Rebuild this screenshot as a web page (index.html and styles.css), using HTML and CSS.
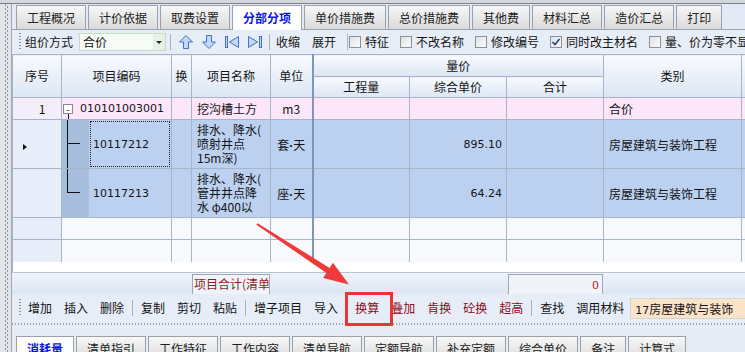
FILE: index.html
```html
<!DOCTYPE html>
<html lang="zh-CN">
<head>
<meta charset="utf-8">
<title>分部分项</title>
<link rel="stylesheet" href="styles.css">
</head>
<body>
<div class="topline"></div>
<div class="app">
  <div class="grip-col"></div>
  <div class="main">
    <div class="tabs">
      <div class="tab">工程概况</div>
      <div class="tab">计价依据</div>
      <div class="tab">取费设置</div>
      <div class="tab active">分部分项</div>
      <div class="tab">单价措施费</div>
      <div class="tab">总价措施费</div>
      <div class="tab">其他费</div>
      <div class="tab">材料汇总</div>
      <div class="tab">造价汇总</div>
      <div class="tab">打印</div>
    </div>

    <div class="toolbar top-tb">
      <span class="grip"></span>
      <span class="lbl">组价方式</span>
      <span class="combo"><span class="combo-text">合价</span><span class="combo-btn"><span class="tri-down"></span></span></span>
      <span class="sep sep-combo"></span>
      <svg class="ico first-ico" width="16" height="16" viewBox="0 0 16 16"><polygon points="8,1.5 14.5,8 10.5,8 10.5,14.5 5.5,14.5 5.5,8 1.5,8" fill="#c4d8f6" stroke="#3d73cc" stroke-width="1"/></svg>
      <svg class="ico" width="16" height="16" viewBox="0 0 16 16"><polygon points="8,14.5 14.5,8 10.5,8 10.5,1.5 5.5,1.5 5.5,8 1.5,8" fill="#c4d8f6" stroke="#3d73cc" stroke-width="1"/></svg>
      <svg class="ico" width="16" height="16" viewBox="0 0 16 16"><rect x="1.5" y="2.5" width="2" height="11" fill="#c4d8f6" stroke="#3d73cc"/><polygon points="14.5,2.5 5.5,8 14.5,13.5" fill="#c4d8f6" stroke="#3d73cc"/></svg>
      <svg class="ico" width="16" height="16" viewBox="0 0 16 16"><polygon points="1.5,2.5 10.5,8 1.5,13.5" fill="#c4d8f6" stroke="#3d73cc"/><rect x="12.5" y="2.5" width="2" height="11" fill="#c4d8f6" stroke="#3d73cc"/></svg>
      <span class="sep sep-after-ico"></span>
      <span class="btn b-first">收缩</span>
      <span class="btn">展开</span>
      <span class="sep sep-chk"></span>
      <span class="chk-item first-chk"><span class="chk"></span><span>特征</span></span>
      <span class="chk-item"><span class="chk"></span><span>不改名称</span></span>
      <span class="chk-item"><span class="chk"></span><span>修改编号</span></span>
      <span class="chk-item"><span class="chk checked"><svg width="10" height="10" viewBox="0 0 10 10"><polyline points="1.5,5 4,7.5 8.5,2" fill="none" stroke="#23408e" stroke-width="1.6"/></svg></span><span>同时改主材名</span></span>
      <span class="chk-item"><span class="chk"></span><span>量、价为零不显示</span></span>
    </div>

    <div class="grid-wrap">
      <table class="grid">
        <colgroup>
          <col class="c-no"><col class="c-code"><col class="c-swap"><col class="c-name"><col class="c-unit">
          <col class="c-qty"><col class="c-price"><col class="c-sum"><col class="c-cat"><col class="c-x">
        </colgroup>
        <thead>
          <tr class="h1">
            <th rowspan="2">序号</th>
            <th rowspan="2">项目编码</th>
            <th rowspan="2">换</th>
            <th rowspan="2">项目名称</th>
            <th rowspan="2" class="unit">单位</th>
            <th colspan="3">量价</th>
            <th rowspan="2">类别</th>
            <th rowspan="2"></th>
          </tr>
          <tr class="h2">
            <th>工程量</th>
            <th>综合单价</th>
            <th>合计</th>
          </tr>
        </thead>
        <tbody>
          <tr class="r-pink r22">
            <td class="no no-pink">1</td>
            <td class="code-cell"><div class="code-wrap"><span class="minus">-</span><span class="num code1">010101003001</span></div></td>
            <td></td>
            <td class="name1">挖沟槽土方</td>
            <td class="unit ctr num-u">m3</td>
            <td></td><td></td><td></td>
            <td class="cat">合价</td>
            <td></td>
          </tr>
          <tr class="r-sel r49">
            <td class="no"><span class="pointer"></span></td>
            <td class="code-cell tree-cell">
              <div class="tree-row">
                <div class="tree"><div class="branch"></div><div class="cont"></div></div>
                <div class="code focus"><span class="num">10117212</span></div>
              </div>
            </td>
            <td></td>
            <td class="name">排水、降水(<br>喷射井点<br>15m深)</td>
            <td class="unit ctr">套<span class="dot">·</span>天</td>
            <td></td>
            <td class="right num">895.10</td>
            <td></td>
            <td class="cat">房屋建筑与装饰工程</td>
            <td></td>
          </tr>
          <tr class="r-sel r49">
            <td class="no"></td>
            <td class="code-cell tree-cell">
              <div class="tree-row">
                <div class="tree"><div class="branch"></div></div>
                <div class="code"><span class="num">10117213</span></div>
              </div>
            </td>
            <td></td>
            <td class="name">排水、降水(<br>管井井点降<br>水 φ400以</td>
            <td class="unit ctr">座<span class="dot">·</span>天</td>
            <td></td>
            <td class="right num">64.24</td>
            <td></td>
            <td class="cat">房屋建筑与装饰工程</td>
            <td></td>
          </tr>
          <tr class="r-empty r22">
            <td class="no"></td><td></td><td></td><td></td><td class="unit"></td><td></td><td></td><td></td><td></td><td></td>
          </tr>
          <tr class="r-empty r23">
            <td class="no"></td><td></td><td></td><td></td><td class="unit"></td><td></td><td></td><td></td><td></td><td></td>
          </tr>
        </tbody>
      </table>
    </div>

    <div class="band"></div>

    <div class="summary">
      <div class="sum-box sum-label">项目合计(清单</div>
      <div class="sum-box sum-val"><span class="num">0</span></div>
    </div>

    <div class="toolbar bot-tb">
      <span class="grip"></span>
      <span class="btn">增加</span>
      <span class="btn">插入</span>
      <span class="btn">删除</span>
      <span class="sep"></span>
      <span class="btn">复制</span>
      <span class="btn">剪切</span>
      <span class="btn">粘贴</span>
      <span class="sep"></span>
      <span class="btn">增子项目</span>
      <span class="btn">导入</span>
      <span class="sep"></span>
      <span class="btn red">换算</span>
      <span class="btn red">叠加</span>
      <span class="btn red">肯换</span>
      <span class="btn red">砼换</span>
      <span class="btn red">超高</span>
      <span class="sep"></span>
      <span class="btn">查找</span>
      <span class="btn">调用材料</span>
      <span class="lib-combo"><span class="num">17</span>房屋建筑与装饰</span>
    </div>

    <div class="dotline"></div>

    <div class="panel">
      <div class="tabs btabs">
        <div class="tab active">消耗量</div>
        <div class="tab">清单指引</div>
        <div class="tab">工作特征</div>
        <div class="tab">工作内容</div>
        <div class="tab">清单导航</div>
        <div class="tab">定额导航</div>
        <div class="tab">补充定额</div>
        <div class="tab">综合单价</div>
        <div class="tab">备注</div>
        <div class="tab">计算式</div>
      </div>
    </div>
  </div>
</div>

<svg class="arrow" width="745" height="352" viewBox="0 0 745 352">
  <polygon points="257.6,223.2 329.6,267.9 332.9,262.8 349,284.5 323.1,278 326.4,272.9 256.4,224.8" fill="#ef3a3a"/>
</svg>
<div class="redbox"></div>
</body>
</html>
```

FILE: styles.css
```css
* { box-sizing: border-box; margin: 0; padding: 0; }

html, body { width: 745px; height: 352px; overflow: hidden; }

body {
  position: relative;
  background: #e4eaf3;
  font-family: "Noto Sans CJK SC", "Noto Sans", sans-serif;
  font-size: 12px;
  color: #141414;
}

.num { font-family: "DejaVu Sans", "Noto Sans CJK SC", sans-serif; font-size: 11px; }

.dot { font-family: "Liberation Sans", "DejaVu Sans", sans-serif; font-size: 12px; font-weight: 700; }

.topline { height: 4px; background: #d4d8de; border-bottom: 1px solid #7b818b; }

.app { display: flex; height: 348px; }

.grip-col {
  width: 12px;
  flex: none;
  background-color: #e1e4e9;
  background-image: linear-gradient(#8d9299 50%, transparent 50%), linear-gradient(#8d9299 50%, transparent 50%);
  background-size: 1px 4px, 1px 4px;
  background-repeat: repeat-y, repeat-y;
  background-position: 5px 0, 7px 2px;
  border-right: 1px solid #a4aab2;
}

.main { flex: 1; min-width: 0; display: flex; flex-direction: column; overflow: hidden; }

/* tabs */
.tabs {
  flex: none;
  height: 26px;
  display: flex;
  align-items: flex-end;
  gap: 2px;
  padding-left: 4px;
  background: #e3eaf5;
  border-bottom: 1px solid #9ca4b0;
}

.tab {
  flex: none;
  height: 24px;
  line-height: 23px;
  padding: 0 10px;
  border: 1px solid #9ca1a9;
  border-bottom: none;
  background: linear-gradient(#f7f7f7, #dadada);
  color: #222;
  white-space: nowrap;
}

.tab.active {
  height: 25px;
  margin-bottom: -1px;
  background: #fff;
  color: #0b16e6;
  font-weight: 700;
}

/* toolbars */
.toolbar {
  flex: none;
  display: flex;
  align-items: center;
  background: #e7edf7;
  white-space: nowrap;
}

.top-tb { height: 24px; padding-left: 7px; }

.grip {
  flex: none;
  width: 3px;
  height: 18px;
  margin-right: 3px;
  background-image: linear-gradient(#8d939b 50%, transparent 50%);
  background-size: 2px 3px;
  background-repeat: repeat-y;
}

.lbl { flex: none; line-height: 16px; }

.combo {
  flex: none;
  display: flex;
  width: 87px;
  height: 18px;
  margin-left: 6px;
  border: 1px solid #c7dcc7;
  background: #f6fbf6;
}

.combo-text { flex: 1; padding-left: 3px; line-height: 16px; }

.combo-btn {
  width: 12px;
  display: flex;
  align-items: center;
  justify-content: center;
  background: #e4f1e4;
}

.tri-down {
  width: 0; height: 0;
  border-left: 3px solid transparent;
  border-right: 3px solid transparent;
  border-top: 3px solid #222;
}

.sep { flex: none; width: 1px; height: 16px; background: #a9b0bb; margin: 0 5px; }

.top-tb .sep-combo { margin: 0 4px 0 4px; }

.ico { flex: none; display: block; margin-left: 7px; }
.ico.first-ico { margin-left: 3px; }

.top-tb .sep-after-ico { margin: 0 6px 0 6px; }

.top-tb .btn { flex: none; line-height: 16px; }
.top-tb .btn + .btn { margin-left: 12px; }

.top-tb .sep-chk { margin: 0 1px 0 11px; }

.chk-item { flex: none; display: flex; align-items: center; gap: 4px; margin-left: 11px; line-height: 16px; }
.chk-item.first-chk { margin-left: 0; }

.chk {
  width: 12px;
  height: 12px;
  border: 1px solid #8c9199;
  background: linear-gradient(135deg, #dfe1e4, #fbfbfb);
  display: flex;
  align-items: center;
  justify-content: center;
}

/* grid */
.grid-wrap { flex: none; height: 208px; overflow: hidden; }

.grid {
  width: 750px;
  table-layout: fixed;
  border-collapse: collapse;
}

.c-no { width: 49px; }
.c-code { width: 110px; }
.c-swap { width: 20px; }
.c-name { width: 79px; }
.c-unit { width: 42px; }
.c-qty { width: 97px; }
.c-price { width: 97px; }
.c-sum { width: 97px; }
.c-cat { width: 138px; }
.c-x { width: 21px; }

.grid th, .grid td {
  border: 1px solid #a8b5c7;
  padding: 0;
  overflow: hidden;
  white-space: nowrap;
  vertical-align: middle;
}

.grid th {
  font-weight: 400;
  background: linear-gradient(#f8fafe, #dce6f4);
  text-align: center;
  line-height: 16px;
}

.grid .h1 th { height: 22px; }
.grid .h2 th { height: 21px; }

.grid .unit { border-right: 2px solid #7f96bb; }

.r22 td { height: 22px; }
.r23 td { height: 23px; }
.r49 td { height: 49px; }

.r-pink td { background: #fde5fa; }
.r-sel td { background: #bcd1f0; }
.r-empty td { background: #f8f9fc; }
.grid td.no { background: #e8eef9; text-align: center; padding-left: 10px; }
.r-pink td.no { background: #f3eefa; }

.ctr { text-align: center; }
.right { text-align: right; padding-right: 4px !important; }
.cat { padding-left: 5px !important; }
.name1 { padding-left: 5px !important; }
.name { padding-left: 5px !important; line-height: 14px; white-space: nowrap; }

.code-cell { padding: 0 !important; }
.code-wrap { display: flex; align-items: center; padding-left: 1px; }

.minus {
  position: relative;
  width: 10px;
  height: 10px;
  border: 1px solid #8a8a8a;
  background: #fff;
  font-size: 10px;
  line-height: 7px;
  text-align: center;
  color: #222;
  flex: none;
}
.minus::after {
  content: "";
  position: absolute;
  left: 4px;
  top: 9px;
  height: 9px;
  border-left: 1px solid #111;
}

.code1 { margin-left: 7px; }

.tree-row { display: flex; height: 48px; }
.tree { width: 27px; flex: none; background: #a8bedd; display: flex; flex-direction: column; }
.branch { height: 24px; width: 13px; margin-left: 5px; border-left: 1px solid #111; border-bottom: 1px solid #111; }
.cont { flex: 1; width: 1px; margin-left: 5px; background: #111; }

.code { flex: 1; display: flex; align-items: center; padding-left: 4px; }
.code.focus { outline: 1px dotted #222; outline-offset: -2px; }

.pointer {
  display: inline-block;
  width: 0; height: 0;
  border-top: 3px solid transparent;
  border-bottom: 3px solid transparent;
  border-left: 4px solid #111;
  margin-right: 34px;
}

/* band + summary */
.band { flex: none; height: 10px; background: #fff; border-left: 1px solid #a8b5c7; }

.summary {
  flex: none;
  height: 22px;
  display: flex;
  align-items: flex-end;
  background: linear-gradient(#eef3fb, #dce6f4);
  border-top: 1px solid #b7c3d3;
}

.sum-box {
  height: 20px;
  border: 1px solid #a3a6ab;
  border-bottom: none;
  background: #f0f4fa;
  line-height: 18px;
  overflow: hidden;
  white-space: nowrap;
}

.sum-label { width: 78px; margin-left: 180px; color: #8c1d1d; padding-left: 1px; }
.sum-val { width: 95px; margin-left: 238px; text-align: right; padding-right: 3px; color: #b02626; }

/* bottom toolbar */
.bot-tb { height: 28px; padding-left: 7px; gap: 12px; }
.bot-tb .grip { margin-right: -6px; }
.bot-tb .btn { flex: none; line-height: 16px; }
.bot-tb .btn.red { color: #8e0c18; }
.bot-tb .sep { margin: 0 -4px; }

.lib-combo {
  flex: none;
  margin-left: -6px;
  height: 21px;
  width: 130px;
  padding-left: 4px;
  line-height: 19px;
  background: #fde3c9;
  border: 1px solid #cfd8cf;
  overflow: hidden;
}

.dotline {
  flex: none;
  height: 3px;
  background-color: #e7edf7;
  background-image: linear-gradient(90deg, #9ba2ab 50%, transparent 50%);
  background-size: 3px 2px;
  background-repeat: repeat-x;
  background-position: 0 1px;
}

.panel { flex: 1; background: #e6ecf5; padding-top: 9px; }

.btabs { background: transparent; border-bottom: none; height: 26px; }

/* overlays */
.arrow { position: absolute; left: 0; top: 0; pointer-events: none; }

.redbox {
  position: absolute;
  left: 345px;
  top: 292px;
  width: 48px;
  height: 34px;
  border: 3px solid #ec3434;
}
```
